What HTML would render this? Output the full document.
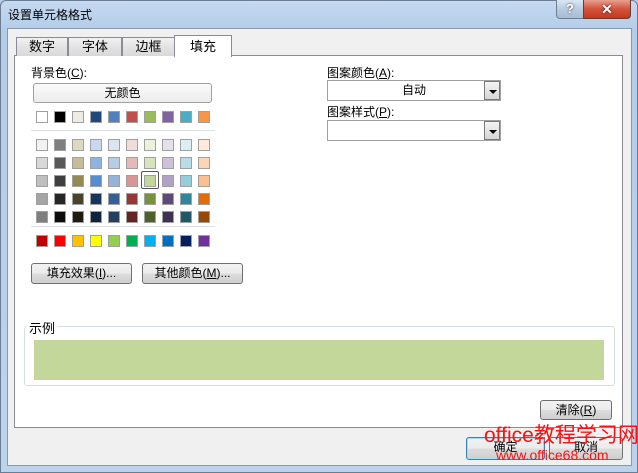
<!DOCTYPE html>
<html><head><meta charset="utf-8"><style>
*{box-sizing:border-box;margin:0;padding:0}
body{width:638px;height:473px;position:relative;overflow:hidden;background:#b9d1ea;font-family:"Liberation Sans","Noto Sans CJK SC",sans-serif;font-size:12px;color:#000}
.a{position:absolute}
.frame{left:0;top:0;width:638px;height:473px;background:linear-gradient(#c6daf0,#b3cce8 30px,#bcd3ec);border:1px solid #6a7d94;border-radius:6px 6px 0 0}
.body{left:7px;top:28px;width:625px;height:438px;background:#f0f0f0;border:1px solid #8a98a8}
.panel{left:14px;top:55px;width:609px;height:373px;background:#fff;border:1px solid #898c95}
.tab{top:37px;height:19px;border:1px solid #898c95;border-bottom:none;background:linear-gradient(#f2f2f2,#e3e3e3 50%,#d9d9d9);text-align:center;line-height:18px;font-size:13px}
.btn{border:1px solid #707070;border-radius:3px;background:linear-gradient(#f2f2f2,#ebebeb 50%,#dddddd 51%,#cfcfcf);text-align:center;font-size:12px;line-height:18px}
.sw{width:12px;height:12px;border:1px solid #a0a0a0}
.sep{height:1px;background:#dde0e4;left:31px;width:184px}
.combo{left:327px;width:174px;height:21px;border:1px solid #a0a0a0;background:#fff;text-align:center;line-height:19px;font-size:12px}
.dd{right:0;top:0;width:16px;height:19px;border:1px solid #7a7a7a;background:linear-gradient(#f4f4f4,#d6d6d6)}
.dd:after{content:"";position:absolute;left:4px;top:8px;border-left:4px solid transparent;border-right:4px solid transparent;border-top:4px solid #000}
</style></head><body>
<div class="a frame"></div>
<div class="a" style="left:8px;top:6px;font-size:12px">设置单元格格式</div>
<div class="a" style="left:556px;top:0;width:28px;height:19px;border:1px solid #6d7f95;border-top:none;border-radius:0 0 0 4px;background:linear-gradient(#dbe6f3,#b8cbe0 50%,#a8bdd5);color:#fff;font-weight:bold;text-align:center;line-height:18px;font-size:13px;text-shadow:0 0 2px #333">?</div>
<div class="a" style="left:583px;top:0;width:48px;height:19px;border:1px solid #6d3a30;border-top:none;border-radius:0 0 4px 0;background:linear-gradient(#e8a090,#d2533b 50%,#c03a20);color:#fff;font-weight:bold;text-align:center;line-height:18px;font-size:14px;text-shadow:0 0 2px #400">✕</div>
<div class="a body"></div>
<div class="a panel"></div>
<div class="a tab" style="left:16px;width:52px">数字</div>
<div class="a tab" style="left:68px;width:54px">字体</div>
<div class="a tab" style="left:122px;width:53px">边框</div>
<div class="a tab" style="left:174px;top:35px;height:22px;width:58px;background:#fff;line-height:22px">填充</div>
<div class="a" style="left:31px;top:64px;font-size:12px">背景色(<u>C</u>):</div>
<div class="a btn" style="left:33px;top:83px;width:179px;height:20px;border-color:#a0a0a0;background:linear-gradient(#fafafa,#ececec)">无颜色</div>
<div class="a sep" style="top:130px"></div>
<div class="a sep" style="top:226px"></div>
<div id="g"></div>
<div class="a btn" style="left:31px;top:263px;width:101px;height:21px">填充效果(<u>I</u>)...</div>
<div class="a btn" style="left:142px;top:263px;width:101px;height:21px">其他颜色(<u>M</u>)...</div>
<div class="a" style="left:327px;top:64px">图案颜色(<u>A</u>):</div>
<div class="a combo" style="top:80px">自动<div class="a dd"></div></div>
<div class="a" style="left:327px;top:103px">图案样式(<u>P</u>):</div>
<div class="a combo" style="top:120px"><div class="a dd"></div></div>
<div class="a" style="left:24px;top:326px;width:591px;height:60px;border:1px solid #d5dfe5;border-radius:3px"></div>
<div class="a" style="left:27px;top:318px;background:#fff;padding:0 2px;font-size:13px">示例</div>
<div class="a" style="left:34px;top:340px;width:570px;height:40px;background:#c4d79b"></div>
<div class="a btn" style="left:540px;top:400px;width:72px;height:20px">清除(<u>R</u>)</div>
<div class="a btn" style="left:466px;top:437px;width:79px;height:23px;border-color:#3c7fb1;box-shadow:inset 0 0 0 1px #9de0fa">确定</div>
<div class="a btn" style="left:549px;top:437px;width:74px;height:23px">取消</div>
<div class="a" style="left:484px;top:423px;color:#ff1010;font-size:21px;line-height:26px;white-space:nowrap">office教程学习网</div>
<div class="a" style="left:496px;top:447px;color:#ff1010;font-size:14px;line-height:16px;white-space:nowrap">www.office68.com</div>
<script>
var rows=[
[111,["#ffffff","#000000","#eeece1","#1f497d","#4f81bd","#c0504d","#9bbb59","#8064a2","#4bacc6","#f79646"]],
[139,["#f2f2f2","#7f7f7f","#ddd9c3","#c6d9f0","#dbe5f1","#f2dcdb","#ebf1dd","#e5e0ec","#dbeef3","#fdeada"]],
[157,["#d8d8d8","#595959","#c4bd97","#8db3e2","#b8cce4","#e5b9b7","#d7e3bc","#ccc1d9","#b7dde8","#fbd5b5"]],
[175,["#bfbfbf","#3f3f3f","#938953","#548dd4","#95b3d7","#d99694","#c3d69b","#b2a2c7","#92cddc","#fac08f"]],
[193,["#a5a5a5","#262626","#494429","#17365d","#366092","#953734","#76923c","#5f497a","#31859b","#e36c09"]],
[211,["#7f7f7f","#0c0c0c","#1d1b10","#0f243e","#244061","#632423","#4f6128","#3f3151","#205867","#974806"]],
[235,["#c00000","#ff0000","#ffc000","#ffff00","#92d050","#00b050","#00b0f0","#0070c0","#002060","#7030a0"]]];
var h="";rows.forEach(function(r){r[1].forEach(function(c,i){h+='<div class="a sw" style="left:'+(36+i*18)+'px;top:'+r[0]+'px;background:'+c+'"></div>';});});
h+='<div class="a" style="left:141px;top:171px;width:18px;height:18px;border:1px solid #555;border-radius:2px"></div>';
document.getElementById("g").innerHTML=h;
</script>
</body></html>
